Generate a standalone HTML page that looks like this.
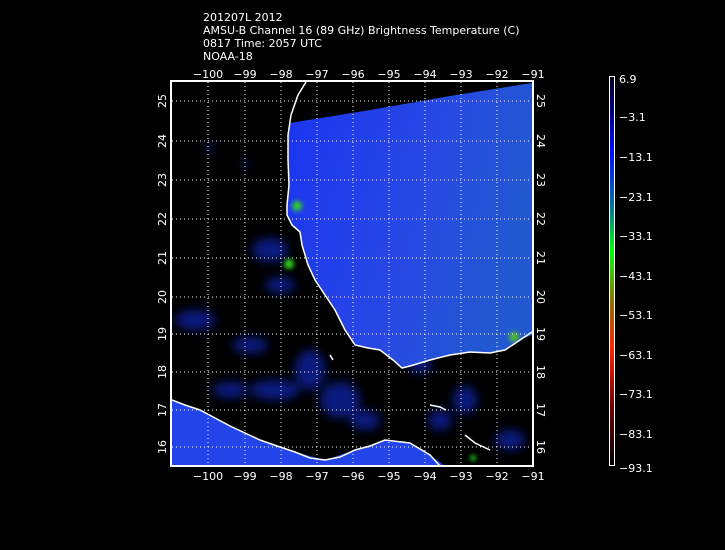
<!DOCTYPE html>
<html><head><style>
html,body{margin:0;padding:0;background:#000;}
body{width:725px;height:550px;position:relative;overflow:hidden;font-family:"DejaVu Sans","Liberation Sans",sans-serif;color:#fff;}
.t{position:absolute;font-size:11px;line-height:13px;white-space:pre;}
</style></head><body>
<div class="t" style="left:203px;top:11px;">201207L 2012
AMSU-B Channel 16 (89 GHz) Brightness Temperature (C)
0817 Time: 2057 UTC
NOAA-18</div>
<svg width="725" height="550" style="position:absolute;left:0;top:0" xmlns="http://www.w3.org/2000/svg">
<defs>
<filter id="b" x="-50%" y="-50%" width="200%" height="200%"><feGaussianBlur stdDeviation="5"/></filter>
<filter id="b2"><feGaussianBlur stdDeviation="2.5"/></filter>
<linearGradient id="g1" x1="0" y1="0" x2="1" y2="0.3">
<stop offset="0" stop-color="#1a34f0"/><stop offset="0.6" stop-color="#2848e4"/><stop offset="1" stop-color="#2258d0"/></linearGradient>
<linearGradient id="cb" x1="0" y1="0" x2="0" y2="1">
<stop offset="0" stop-color="#000020"/><stop offset="0.1" stop-color="#000090"/><stop offset="0.2" stop-color="#0010ff"/><stop offset="0.33" stop-color="#0070a0"/><stop offset="0.45" stop-color="#00ff00"/><stop offset="0.58" stop-color="#907000"/><stop offset="0.7" stop-color="#ff2000"/><stop offset="0.85" stop-color="#700000"/><stop offset="1" stop-color="#000000"/></linearGradient>
<clipPath id="c"><rect x="172" y="82" width="360" height="383"/></clipPath>
</defs>
<g clip-path="url(#c)">
<g filter="url(#b)" fill="#1020a0" opacity="0.8">
<ellipse cx="195" cy="320" rx="20" ry="10"/>
<ellipse cx="250" cy="345" rx="18" ry="8"/>
<ellipse cx="275" cy="390" rx="25" ry="10"/>
<ellipse cx="310" cy="370" rx="15" ry="20"/>
<ellipse cx="340" cy="400" rx="20" ry="18"/>
<ellipse cx="230" cy="390" rx="18" ry="8"/>
<ellipse cx="365" cy="420" rx="15" ry="10"/>
<ellipse cx="440" cy="420" rx="12" ry="10"/>
<ellipse cx="465" cy="400" rx="12" ry="14"/>
<ellipse cx="510" cy="440" rx="15" ry="10"/>
<ellipse cx="270" cy="250" rx="18" ry="12"/>
<ellipse cx="280" cy="285" rx="15" ry="8"/>
<ellipse cx="210" cy="148" rx="5" ry="3"/>
<ellipse cx="245" cy="163" rx="3" ry="4"/>
<ellipse cx="420" cy="365" rx="12" ry="8"/>
</g>
<path d="M290 123 L370 110 L450 96 L532 83 L532 335 L520 340 L505 350 L490 353 L470 352 L450 355 L430 360 L410 366 L402 368 L393 360 L380 350 L368 348 L355 345 L345 330 L335 310 L328 300 L315 280 L308 265 L302 245 L300 232 L292 225 L287 215 L287 205 L289 185 L288 160 L288 135Z" fill="url(#g1)"/>
<path d="M172 400 L200 410 L230 426 L260 440 L295 452 L325 460 L355 450 L385 440 L410 443 L430 455 L445 466 L172 466Z" fill="#2244e8"/>
<g filter="url(#b2)">
<circle cx="297" cy="206" r="5" fill="#30d020"/>
<circle cx="289" cy="264" r="5" fill="#30d020"/>
<circle cx="514" cy="337" r="5" fill="#50c020"/>
<circle cx="473" cy="458" r="3" fill="#20d020"/>
</g>
<g fill="none" stroke="#fff" stroke-width="1.5">
<path d="M306 82 L298 95 L291 115 L288 135 L288 160 L289 185 L287 205 L287 215 L292 225 L300 232 L302 245 L308 265 L315 280 L325 295 L335 310 L345 330 L355 345 L368 348 L380 350 L393 360 L402 368 L410 366 L430 360 L450 355 L470 352 L490 353 L505 350 L520 340 L532 332"/>
<path d="M172 400 L185 405 L200 410 L215 418 L230 426 L245 433 L260 440 L280 447 L295 452 L310 458 L325 460 L340 457 L355 450 L370 446 L385 440 L410 443 L430 455 L440 466"/>
<path d="M430 405 L440 407 L446 410"/><path d="M465 435 L475 443 L490 450"/><path d="M330 355 L333 360"/>
</g>
<g stroke="#fff" stroke-width="1" stroke-dasharray="1,3">
<path d="M208 82V465M245 82V465M281 82V465M317 82V465M353 82V465M389 82V465M425 82V465M461 82V465M497 82V465"/>
<path d="M172 101H532M172 141H532M172 180H532M172 219H532M172 258H532M172 297H532M172 334H532M172 372H532M172 410H532M172 447H532"/>
</g>
</g>
<rect x="171" y="81" width="362" height="385" fill="none" stroke="#fff" stroke-width="2"/>
<rect x="609.5" y="76.5" width="5" height="389" fill="url(#cb)" stroke="#fff" stroke-width="1"/>
<g fill="#fff" font-size="11" font-family="DejaVu Sans, Liberation Sans, sans-serif">
<g text-anchor="middle">
<text x="208" y="78">−100</text><text x="245" y="78">−99</text><text x="281" y="78">−98</text><text x="317" y="78">−97</text><text x="353" y="78">−96</text><text x="389" y="78">−95</text><text x="425" y="78">−94</text><text x="461" y="78">−93</text><text x="497" y="78">−92</text><text x="533" y="78">−91</text>
<text x="208" y="480">−100</text><text x="245" y="480">−99</text><text x="281" y="480">−98</text><text x="317" y="480">−97</text><text x="353" y="480">−96</text><text x="389" y="480">−95</text><text x="425" y="480">−94</text><text x="461" y="480">−93</text><text x="497" y="480">−92</text><text x="533" y="480">−91</text>
</g>
<g text-anchor="middle">
<text transform="translate(166,101) rotate(-90)">25</text><text transform="translate(166,141) rotate(-90)">24</text><text transform="translate(166,180) rotate(-90)">23</text><text transform="translate(166,219) rotate(-90)">22</text><text transform="translate(166,258) rotate(-90)">21</text><text transform="translate(166,297) rotate(-90)">20</text><text transform="translate(166,334) rotate(-90)">19</text><text transform="translate(166,372) rotate(-90)">18</text><text transform="translate(166,410) rotate(-90)">17</text><text transform="translate(166,447) rotate(-90)">16</text>
<text transform="translate(537,101) rotate(90)">25</text><text transform="translate(537,141) rotate(90)">24</text><text transform="translate(537,180) rotate(90)">23</text><text transform="translate(537,219) rotate(90)">22</text><text transform="translate(537,258) rotate(90)">21</text><text transform="translate(537,297) rotate(90)">20</text><text transform="translate(537,334) rotate(90)">19</text><text transform="translate(537,372) rotate(90)">18</text><text transform="translate(537,410) rotate(90)">17</text><text transform="translate(537,447) rotate(90)">16</text>
</g>
<text x="619" y="83">6.9</text><text x="619" y="121">−3.1</text><text x="619" y="161">−13.1</text><text x="619" y="201">−23.1</text><text x="619" y="240">−33.1</text><text x="619" y="280">−43.1</text><text x="619" y="319">−53.1</text><text x="619" y="359">−63.1</text><text x="619" y="398">−73.1</text><text x="619" y="438">−83.1</text><text x="619" y="472">−93.1</text>
</g>
</svg>
</body></html>
